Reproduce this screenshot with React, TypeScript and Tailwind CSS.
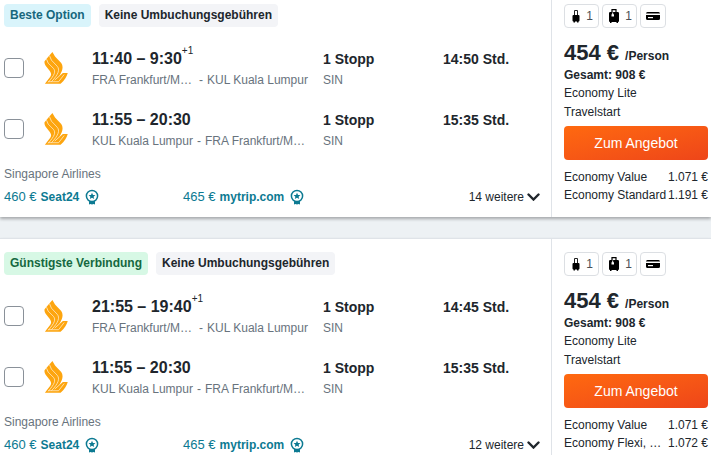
import clsx from 'clsx';

type Leg = {
  time: string;
  plusDay?: string;
  from: string;
  to: string;
  stops: string;
  via: string;
  duration: string;
};

type Fare = { name: string; price: string };

type Offer = {
  id: string;
  label: string;
  tone: 'blue' | 'green';
  legs: Leg[];
  more: string;
  fares: Fare[];
};

const outbound = {
  plusDay: '+1',
  from: 'FRA Frankfurt/M…',
  to: 'KUL Kuala Lumpur',
  stops: '1 Stopp',
  via: 'SIN',
};

const inbound: Leg = {
  time: '11:55 – 20:30',
  from: 'KUL Kuala Lumpur',
  to: 'FRA Frankfurt/M…',
  stops: '1 Stopp',
  via: 'SIN',
  duration: '15:35 Std.',
};

const offers: Offer[] = [
  {
    id: 'best',
    label: 'Beste Option',
    tone: 'blue',
    legs: [{ ...outbound, time: '11:40 – 9:30', duration: '14:50 Std.' }, inbound],
    more: '14 weitere',
    fares: [
      { name: 'Economy Value', price: '1.071 €' },
      { name: 'Economy Standard', price: '1.191 €' },
    ],
  },
  {
    id: 'cheapest',
    label: 'Günstigste Verbindung',
    tone: 'green',
    legs: [{ ...outbound, time: '21:55 – 19:40', duration: '14:45 Std.' }, inbound],
    more: '12 weitere',
    fares: [
      { name: 'Economy Value', price: '1.071 €' },
      { name: 'Economy Flexi, …', price: '1.072 €' },
    ],
  },
];

function AirlineLogo() {
  return (
    <svg viewBox="0 0 72 98" className="h-8 w-6 shrink-0" aria-hidden="true">
      <path
        fill="#fda50f"
        d="M25 0L33 14L52 34C59 44 57 56 46 74L57 64H72C69 76 62 86 50 97H2L19 75C23 68 21 63 14 54C5 44 -1 38 1 28L6 22L13 14Z"
      />
      <g fill="none" stroke="#fff3dc" strokeWidth="2.2">
        <path d="M7 22L12 34L28 50C36 60 32 70 12 93" />
        <path d="M16 11L22 25L40 44C48 54 44 68 22 91" />
        <path d="M12 91H44L61 69" />
        <path d="M32 86L48 72" />
      </g>
    </svg>
  );
}

function AwardIcon() {
  return (
    <svg viewBox="0 0 14 16" className="h-4 w-3.5" fill="none" aria-hidden="true">
      <circle cx="7" cy="7" r="5.6" stroke="#0c7a92" strokeWidth="1.5" />
      <path
        fill="#0c7a92"
        d="M7 3.7l1 2.2 2.4.2-1.8 1.6.6 2.4L7 8.8 4.8 10.1l.6-2.4-1.8-1.6 2.4-.2zM4 12l3 .9 3-.9v3.5l-1.5-.6L7 15.5l-1.500-.6-1.500.6z"
      />
    </svg>
  );
}

function HandBagIcon() {
  return (
    <svg viewBox="0 0 8 14" className="h-3.5 w-2" aria-hidden="true">
      <path d="M2.5 7V1.5h3V7" fill="none" stroke="#222" strokeWidth="1" />
      <path d="M1.5 6h5q1 0 1 1v4.5q0 1-1 1v1H5v-1H3v1H1.500v-1q-1 0-1-1V7q0-1 1-1z" fill="#000" />
    </svg>
  );
}

function SuitcaseIcon() {
  return (
    <svg viewBox="0 0 10 14" className="h-3.5 w-2.5" aria-hidden="true">
      <path d="M3 4V.7h4V4" fill="none" stroke="#000" strokeWidth="1.2" />
      <path d="M1.2 3h7.6Q10 3 10 4.2v7.6Q10 13 9 13v1H7.5v-1h-5v1H1v-1q-1 0-1-1.2V4.2Q0 3 1.2 3z" fill="#000" />
      <path d="M3.2 3.5h1v1.8h.8v2.2H2.5V5.3h.7z" fill="#fff" />
    </svg>
  );
}

function CardIcon() {
  return (
    <svg viewBox="0 0 14 10" className="h-2.5 w-3.5" aria-hidden="true">
      <path d="M1.5 1h11q1.5 0 1.5 1.5H0Q0 1 1.5 1zM0 4h14v3.5Q14 9 12.5 9h-11Q0 9 0 7.5z" fill="#000" />
      <path d="M2 6h5v1.2H2z" fill="#fff" />
    </svg>
  );
}

function LegRow({ leg }: { leg: Leg }) {
  return (
    <div className="flex h-11 items-center">
      <input
        type="checkbox"
        aria-label={`Flug ${leg.time} auswählen`}
        className="size-5 shrink-0 appearance-none rounded border border-[#8a9199] bg-white checked:bg-[#0c7a92]"
      />
      <div className="ml-5">
        <AirlineLogo />
      </div>
      <div className="ml-6 min-w-0 grow self-start">
        <div className="flex text-base leading-[26px] font-bold">
          {leg.time}
          {leg.plusDay && <span className="text-[10px] leading-2.5 font-normal">{leg.plusDay}</span>}
        </div>
        <div className="flex gap-1 leading-4 whitespace-nowrap text-[#68737d]">
          <span className={clsx(leg.plusDay && 'pr-[3px]')}>{leg.from}</span>
          <span>-</span>
          <span>{leg.to}</span>
        </div>
      </div>
      <div className="w-[120px] shrink-0 self-start">
        <div className="text-sm leading-[26px] font-bold">{leg.stops}</div>
        <div className="leading-4 text-[#68737d]">{leg.via}</div>
      </div>
      <div className="w-[108px] shrink-0 self-start text-sm leading-[26px] font-bold">{leg.duration}</div>
    </div>
  );
}

function ProviderLink({ price, name }: { price: string; name: string }) {
  return (
    <a href="#" className="flex items-center text-[#0c7a92]">
      <span className="text-[13px]">{price}</span>
      <span className="ml-1 font-bold">{name}</span>
      <span className="ml-1.5">
        <AwardIcon />
      </span>
    </a>
  );
}

function OfferCard({ offer, first }: { offer: Offer; first: boolean }) {
  return (
    <article
      className={clsx(
        'flex bg-white shadow-[0_2px_3px_rgba(0,0,0,0.3)]',
        !first && 'mt-[21px] border-t border-[#dfe3e8]',
      )}
    >
      <div className={clsx('min-w-0 grow pb-2.5 pl-1', first ? 'pt-1' : 'pt-[13px]')}>
        <div className="flex gap-2 leading-[23px] font-bold">
          <span
            className={clsx(
              'rounded px-1.5',
              offer.tone === 'blue' ? 'bg-[#d9f4fb] text-[#17677d]' : 'bg-[#d7f8e5] text-[#15683f]',
            )}
          >
            {offer.label}
          </span>
          <span className="rounded bg-[#f3f4f7] px-1.5">Keine Umbuchungsgebühren</span>
        </div>
        <div className="mt-[19px] flex flex-col gap-[17px]">
          {offer.legs.map((leg, i) => (
            <LegRow key={i} leg={leg} />
          ))}
        </div>
        <div className="mt-[13px] leading-5 text-[#68737d]">Singapore Airlines</div>
        <div className="mt-[3px] grid grid-cols-[179px_1fr_auto] leading-5">
          <ProviderLink price="460 €" name="Seat24" />
          <ProviderLink price="465 €" name="mytrip.com" />
          <button type="button" className="mr-[11px] flex items-center gap-[3px]">
            {offer.more}
            <svg viewBox="0 0 13 8" className="h-2 w-[13px]" fill="none" aria-hidden="true">
              <path d="M1.5 1.5l5 5 5-5" stroke="#20262c" strokeWidth="2.4" strokeLinecap="round" />
            </svg>
          </button>
        </div>
      </div>

      <div
        className={clsx(
          'w-40 shrink-0 border-l border-[#dfe3e8] pr-[3px] pl-3',
          first ? 'pt-1' : 'pt-[13px]',
        )}
      >
        <div className="flex h-6 gap-[3px] text-[#4a4f55] *:flex *:items-center *:justify-center *:rounded *:border *:border-[#dcdfe3]">
          <span className="w-[35px] gap-1.5 pl-0.5">
            <HandBagIcon />1
          </span>
          <span className="w-[35px] gap-1.5 pl-0.5">
            <SuitcaseIcon />1
          </span>
          <span className="w-[26px]">
            <CardIcon />
          </span>
        </div>
        <div className="mt-3 flex h-[26px] items-baseline gap-1.5 leading-[26px] font-bold">
          <span className="text-[22px]">454 €</span>
          <span>/Person</span>
        </div>
        <div className="leading-[18px] font-bold">Gesamt: 908 €</div>
        <div className="leading-[18px]">Economy Lite</div>
        <div className="mt-px leading-[18px]">Travelstart</div>
        <button
          type="button"
          className="mt-[5px] h-[34px] w-full rounded bg-linear-to-br from-[#ff690f] to-[#ee4519] text-sm font-medium text-white"
        >
          Zum Angebot
        </button>
        <dl className="mt-2 leading-[18px]">
          {offer.fares.map((fare) => (
            <div key={fare.name} className="flex justify-between whitespace-nowrap">
              <dt>{fare.name}</dt>
              <dd>{fare.price}</dd>
            </div>
          ))}
        </dl>
      </div>
    </article>
  );
}

export default function App() {
  return (
    <main className="overflow-hidden bg-[#edf1f4] font-['Liberation_Sans',Arial,sans-serif] text-xs text-[#20262c]">
      {offers.map((offer, i) => (
        <OfferCard key={offer.id} offer={offer} first={i === 0} />
      ))}
    </main>
  );
}
